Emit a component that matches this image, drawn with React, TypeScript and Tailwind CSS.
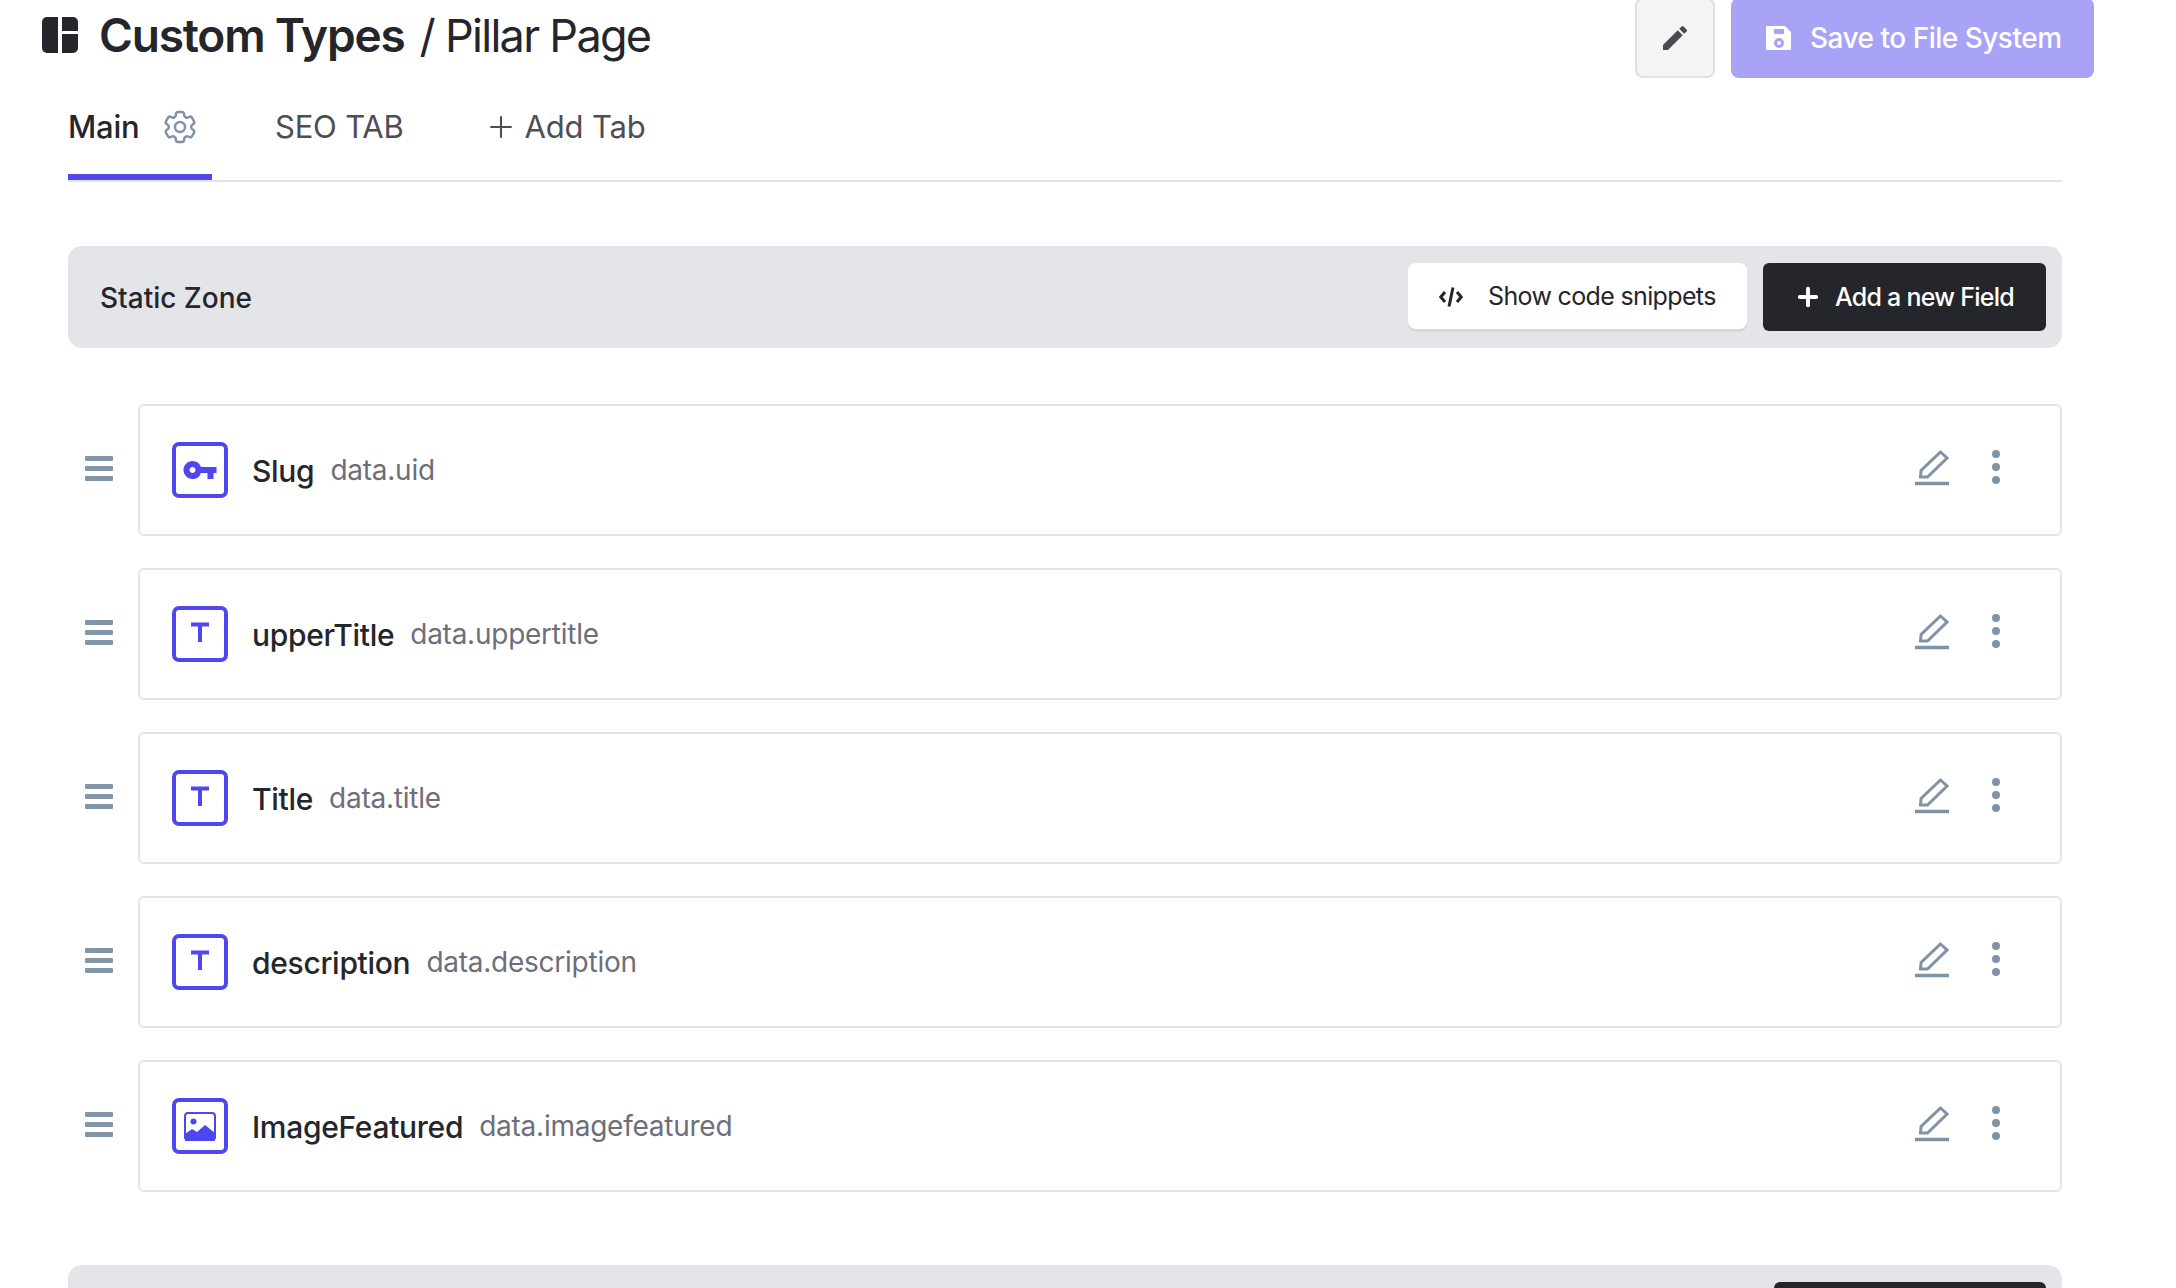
import React from 'react';
import { Plus } from 'lucide-react';
import { HiOutlineCog6Tooth } from 'react-icons/hi2';
import { MdEdit, MdVpnKey } from 'react-icons/md';

const LayoutIcon = () => (
  <svg viewBox="0 0 36 36" className="w-9 h-9 shrink-0 -mt-[8px] text-[#25262b]" fill="currentColor">
    <path d="M5 0h11v36H5a5 5 0 0 1-5-5V5a5 5 0 0 1 5-5z" />
    <path d="M20 0h11a5 5 0 0 1 5 5v9H20z" />
    <path d="M20 17h16v14a5 5 0 0 1-5 5H20z" />
  </svg>
);

const SaveIcon = () => (
  <svg viewBox="0 0 26 26" className="w-[26px] h-[26px] text-white">
    <path fill="currentColor" fillRule="evenodd" d="M1 1h18l6 6v17a1 1 0 0 1-1 1H1a1 1 0 0 1-1-1V2a1 1 0 0 1 1-1zm7 3v5h10V4zm5 9a5 5 0 1 0 0 10 5 5 0 0 0 0-10zm0 3a2 2 0 1 1 0 4 2 2 0 0 1 0-4z" />
  </svg>
);

const CodeIcon = () => (
  <svg viewBox="0 0 24 24" className="w-6 h-6 mt-[2px]" fill="none" stroke="currentColor" strokeWidth="3">
    <path d="M6 7 1.8 12 6 17M18 7l4.2 5-4.2 5M14 2.5l-4 19" />
  </svg>
);

const UnderlinedPencil = () => (
  <svg viewBox="0 0 34 36" className="w-[34px] h-9 text-[#8093a6]" fill="none" stroke="currentColor">
    <path strokeWidth="3" d="M25.5 2 32 8 12.5 27H5.5l.6-6.5z" />
    <path strokeWidth="3.4" d="M0 33.5h34" />
  </svg>
);

const KebabDots = () => (
  <div className="w-2 flex flex-col gap-[5px] shrink-0">
    <div className="h-2 rounded-full bg-[#8093a6]" />
    <div className="h-2 rounded-full bg-[#8093a6]" />
    <div className="h-2 rounded-full bg-[#8093a6]" />
  </div>
);

const DragHandle = () => (
  <div className="w-7 flex flex-col gap-[5px] shrink-0">
    <div className="h-[5px] rounded-[1px] bg-[#8295a6]" />
    <div className="h-[5px] rounded-[1px] bg-[#8295a6]" />
    <div className="h-[5px] rounded-[1px] bg-[#8295a6]" />
  </div>
);

const TextGlyph = () => (
  <svg viewBox="0 0 20 20" className="w-5 h-5 -mt-1 text-[#5046f0]" fill="none" stroke="currentColor" strokeWidth="4">
    <path d="M1 2.5h18M10 2.5V20" />
  </svg>
);

const ImageGlyph = () => (
  <svg viewBox="0 0 32 29" className="w-8 h-[29px] text-[#5046f0]">
    <rect x="1" y="1" width="30" height="27" rx="3" fill="none" stroke="currentColor" strokeWidth="2" />
    <circle cx="9.5" cy="9.5" r="3" fill="currentColor" />
    <path fill="currentColor" d="M1 22l7-5 5 3 8-7 10 8v6a3 3 0 0 1-3 3H4a3 3 0 0 1-3-3z" />
  </svg>
);

type FieldRowProps = { icon: React.ReactNode; name: string; path: string };

const FieldRow = ({ icon, name, path }: FieldRowProps) => (
  <div className="flex items-center">
    <div className="w-[70px] pl-[17px] -mt-[4px] shrink-0">
      <DragHandle />
    </div>
    <div className="flex-1 h-[132px] flex items-center bg-white border-2 border-[#e4e4e6] rounded-[6px] pl-[32px]">
      <div className="w-14 h-14 border-[4px] border-[#5046f0] rounded-[7px] flex items-center justify-center shrink-0">
        {icon}
      </div>
      <span className="ml-[24px] mt-[2px] text-[30px] font-medium tracking-[-0.3px] text-[#25262b] leading-none">{name}</span>
      <span className="ml-[16px] text-[28px] tracking-[-0.25px] text-[#6e6e7a] leading-none">{path}</span>
      <div className="ml-auto flex items-center -mt-[4px]">
        <UnderlinedPencil />
        <div className="ml-[43px] mr-[60px] -mt-[2px]">
          <KebabDots />
        </div>
      </div>
    </div>
  </div>
);

export default function App() {
  return (
    <div className="w-[2176px] h-[1288px] overflow-hidden bg-white font-['Inter',sans-serif]">
      {/* Header */}
      <div className="h-[78px] flex items-center pl-[42px] pr-[82px]">
        <LayoutIcon />
        <h1 className="ml-[21px] -mt-[8px] text-[46px] leading-none font-semibold tracking-[-1.2px] text-[#25262b]">Custom Types</h1>
        <span className="ml-[15px] -mt-[8px] text-[45px] leading-none tracking-[-1.7px] text-[#25262b]">/ Pillar Page</span>
        <button className="ml-auto -mt-[2px] w-20 h-20 bg-[#f3f4f6] border-2 border-[#dfe0e3] rounded-[8px] flex items-center justify-center text-[#4a4a4f]">
          <MdEdit className="w-8 h-8" />
        </button>
        <button className="ml-4 -mt-[2px] w-[363px] h-20 bg-[#a8a3f7] rounded-[8px] flex items-center pl-[35px] text-[28px] font-medium tracking-[-0.5px] text-white">
          <SaveIcon />
          <span className="ml-[18px]">Save to File System</span>
        </button>
      </div>

      <div className="pl-[68px] pr-[114px]">
        {/* Tabs */}
        <div className="h-[104px] flex border-b-2 border-[#e2e3e8] text-[31px] tracking-[-0.2px] text-[#4d4d56]">
          <div className="w-[144px] h-[102px] flex items-center gap-[20px] border-b-[6px] border-[#5046f0] pt-[3px] text-[#25262b] font-medium">
            <span>Main</span>
            <HiOutlineCog6Tooth className="w-[40px] h-[40px] shrink-0 -mt-[2px] text-[#8093a6]" />
          </div>
          <div className="ml-[63px] flex items-center h-[102px] pb-1">SEO TAB</div>
          <div className="ml-[82px] flex items-center h-[102px] pb-1">
            <Plus className="w-[34px] h-[34px] -ml-[2px] mr-[7px]" strokeWidth={1.5} />
            Add Tab
          </div>
        </div>

        <div className="mt-16 h-[102px] bg-[#e4e5e9] rounded-[14px] flex items-center pl-8 pr-4">
          <span className="mt-[2px] text-[28px] font-medium text-[#25262b]">Static Zone</span>
          <button className="ml-auto w-[339px] h-[66px] -mt-[3px] bg-white rounded-[8px] shadow-[0_3px_0_#d8d8da] flex items-center pl-[31px] text-[25px] tracking-[-0.65px] text-[#25262b]">
            <CodeIcon />
            <span className="ml-[25px] mt-[3px]">Show code snippets</span>
          </button>
          <button className="ml-4 w-[283px] h-[68px] bg-[#25262b] rounded-[6px] flex items-center pl-[31px] text-[25px] font-medium tracking-[-0.75px] text-white">
            <Plus className="w-7 h-7 shrink-0" strokeWidth={3.4} />
            <span className="ml-[13px] mt-[1px]">Add a new Field</span>
          </button>
        </div>

        <div className="mt-14 flex flex-col gap-8">
          <FieldRow icon={<MdVpnKey className="w-9 h-9 text-[#5046f0]" />} name="Slug" path="data.uid" />
          <FieldRow icon={<TextGlyph />} name="upperTitle" path="data.uppertitle" />
          <FieldRow icon={<TextGlyph />} name="Title" path="data.title" />
          <FieldRow icon={<TextGlyph />} name="description" path="data.description" />
          <FieldRow icon={<ImageGlyph />} name="ImageFeatured" path="data.imagefeatured" />
        </div>

        {/* Next zone, only its top edge is on screen */}
        <div className="mt-[73px] h-[102px] bg-[#e4e5e9] rounded-[14px] flex items-center justify-end pr-4">
          <div className="w-[272px] h-[68px] bg-[#25262b] rounded-[6px]" />
        </div>
      </div>
    </div>
  );
}
